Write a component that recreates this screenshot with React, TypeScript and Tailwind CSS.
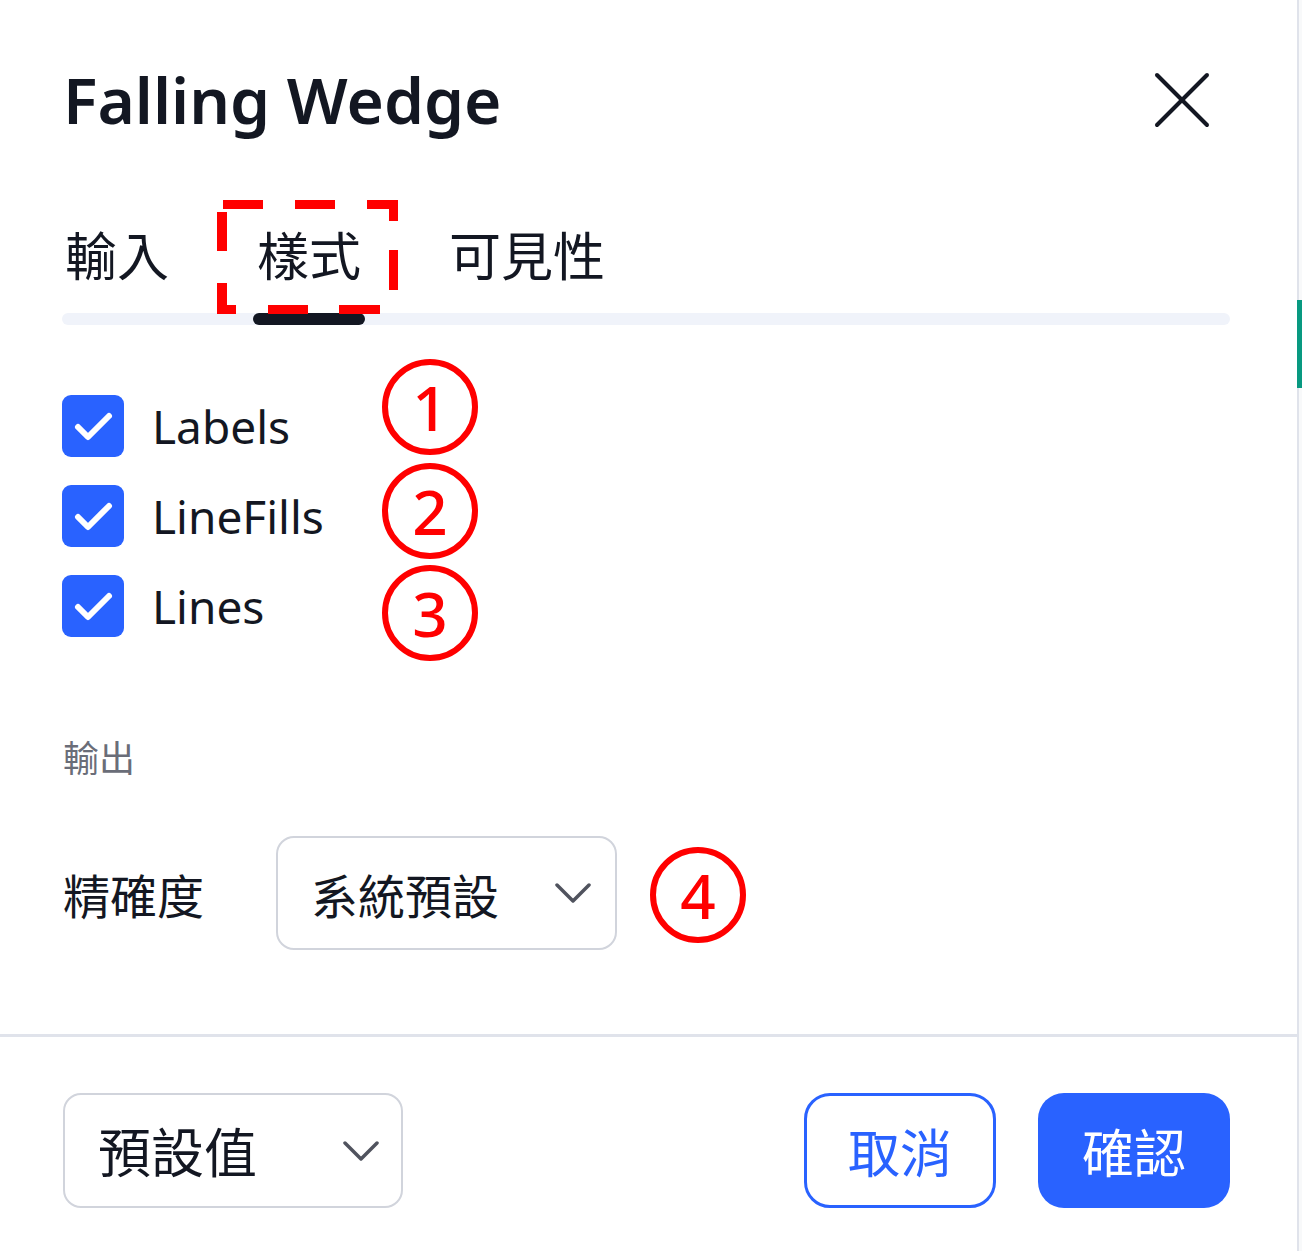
import React from "react";

function Check() {
  return (
    <div className="w-[62px] h-[62px] rounded-[9px] bg-[#2962ff] flex items-center justify-center shrink-0">
      <svg width="62" height="62" viewBox="0 0 62 62" fill="none">
        <polyline points="16,32 26,42 47,21" stroke="#ffffff" strokeWidth="6" strokeLinecap="round" strokeLinejoin="round" />
      </svg>
    </div>
  );
}

function Chevron() {
  return (
    <svg width="36" height="22" viewBox="0 0 36 22" fill="none">
      <polyline points="2,3 18,19 34,3" stroke="#50535e" strokeWidth="3.5" strokeLinecap="round" strokeLinejoin="round" />
    </svg>
  );
}

function Circled({ n, className }: { n: string; className: string }) {
  return (
    <div
      className={
        "absolute w-[96px] h-[96px] rounded-full border-[6px] border-[#ff0000] flex items-center justify-center text-[#ff0000] text-[62px] leading-none font-medium font-['Noto_Sans',sans-serif] " +
        className
      }
    >
      {n}
    </div>
  );
}

export default function App() {
  return (
    <div className="relative w-[1302px] h-[1251px] overflow-hidden bg-white flex font-['Noto_Sans','Noto_Sans_CJK_TC',sans-serif] text-[#131722]">
      <div className="w-[1297px] flex flex-col pt-[50px]">
        {/* header */}
        <div className="h-[100px] flex items-center justify-between pl-[63px] pr-[87px]">
          <div className="text-[64px] font-semibold leading-none">Falling Wedge</div>
          <svg width="56" height="56" viewBox="0 0 56 56" fill="none">
            <line x1="3" y1="3" x2="53" y2="53" stroke="#131722" strokeWidth="4" strokeLinecap="round" />
            <line x1="53" y1="3" x2="3" y2="53" stroke="#131722" strokeWidth="4" strokeLinecap="round" />
          </svg>
        </div>

        {/* tabs */}
        <div className="mt-[78px] pl-[62px] pr-[67px]">
          <div className="flex gap-[88px] pl-[3px] h-[52px] items-center text-[52px] leading-none font-['Noto_Sans_CJK_TC',sans-serif]">
            <span>輸入</span>
            <span>樣式</span>
            <span>可見性</span>
          </div>
          <div className="mt-[33px] h-[12px] rounded-full bg-[#f0f3fa] flex">
            <div className="ml-[191px] w-[112px] h-full rounded-full bg-[#131722]" />
          </div>
        </div>

        {/* checkboxes */}
        <div className="mt-[56px] pl-[62px] flex flex-col">
          {["Labels", "LineFills", "Lines"].map((t) => (
            <div key={t} className="h-[90px] flex items-center gap-[28px]">
              <Check />
              <span className="text-[46px] leading-none text-[#131722]">{t}</span>
            </div>
          ))}
        </div>

        {/* output */}
        <div className="mt-[87px] pl-[63px] text-[36px] leading-none text-[#6a6d78] font-['Noto_Sans_CJK_TC',sans-serif]">輸出</div>

        {/* precision */}
        <div className="mt-[62px] pl-[63px] h-[114px] flex items-center font-['Noto_Sans_CJK_TC',sans-serif]">
          <div className="w-[213px] text-[47px] leading-none">精確度</div>
          <div className="w-[341px] h-full border-2 border-[#d1d4dc] rounded-[18px] flex items-center justify-between pl-[33px] pr-[24px]">
            <span className="text-[47px] leading-none">系統預設</span>
            <Chevron />
          </div>
        </div>

        {/* divider */}
        <div className="mt-[84px] h-[3px] bg-[#e0e3eb]" />

        {/* footer */}
        <div className="mt-[56px] h-[115px] pl-[63px] pr-[67px] flex justify-between font-['Noto_Sans_CJK_TC',sans-serif]">
          <div className="w-[340px] h-full border-2 border-[#d1d4dc] rounded-[18px] flex items-center justify-between pl-[33px] pr-[22px]">
            <span className="text-[53px] leading-none">預設值</span>
            <Chevron />
          </div>
          <div className="flex gap-[42px] h-full">
            <div className="w-[192px] h-full border-[3px] border-[#2962ff] rounded-[26px] flex items-center justify-center text-[52px] leading-none text-[#2962ff]">取消</div>
            <div className="w-[192px] h-full bg-[#2962ff] rounded-[26px] flex items-center justify-center text-[52px] leading-none text-white">確認</div>
          </div>
        </div>
      </div>

      {/* right edge strip */}
      <div className="relative w-[5px] border-l-2 border-[#e0e3eb] bg-[#f8f9fa]">
        <div className="absolute left-[-2px] top-[300px] w-[5px] h-[88px] bg-[#089981]" />
      </div>

      {/* annotations */}
      <svg className="absolute left-[217px] top-[200px]" width="181" height="115" viewBox="0 0 181 115" fill="#ff0000">
        <rect x="6" y="0" width="40" height="9" />
        <rect x="78" y="0" width="40" height="9" />
        <rect x="150" y="0" width="31" height="9" />
        <rect x="172" y="0" width="9" height="21" />
        <rect x="172" y="50" width="9" height="40" />
        <rect x="122" y="105" width="41" height="9" />
        <rect x="51" y="105" width="40" height="9" />
        <rect x="0" y="105" width="19" height="9" />
        <rect x="0" y="12" width="10" height="39" />
        <rect x="0" y="83" width="10" height="31" />
      </svg>
      <Circled n="1" className="left-[382px] top-[359px]" />
      <Circled n="2" className="left-[382px] top-[463px]" />
      <Circled n="3" className="left-[382px] top-[565px]" />
      <Circled n="4" className="left-[650px] top-[847px]" />
    </div>
  );
}
